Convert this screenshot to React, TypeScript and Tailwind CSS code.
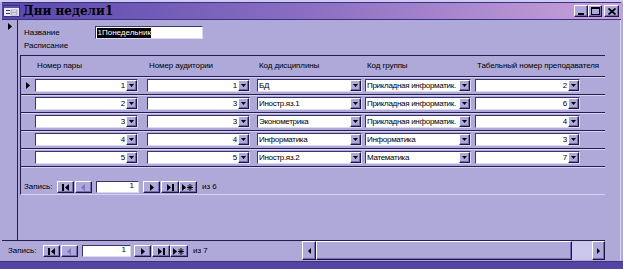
import type { ReactNode } from 'react';

const rows = [
  ['1', '1', 'БД', 'Прикладная информатик.', '2'],
  ['2', '3', 'Иностр.яз.1', 'Прикладная информатик.', '6'],
  ['3', '3', 'Эконометрика', 'Прикладная информатик.', '4'],
  ['4', '4', 'Информатика', 'Информатика', '3'],
  ['5', '5', 'Иностр.яз.2', 'Математика', '7'],
];

const cols = [
  { title: 'Номер пары', cell: 'w-[112px]', box: 'w-[103px]', right: true },
  { title: 'Номер аудитории', cell: 'w-[110px]', box: 'w-[103px]', right: true },
  { title: 'Код дисциплины', cell: 'w-[108px]', box: 'w-[105px]', right: false },
  { title: 'Код группы', cell: 'w-[110px]', box: 'w-[106px]', right: false },
  { title: 'Табельный номер преподавателя', cell: 'w-[110px]', box: 'w-[105px]', right: true },
];

function Raised({ className, children }: { className: string; children?: ReactNode }) {
  return (
    <div
      className={`flex items-center justify-center bg-[#aea9d9] border border-t-white border-l-white border-r-[#1c1742] border-b-[#1c1742] shadow-[inset_-1px_-1px_0_#736db0] ${className}`}
    >
      {children}
    </div>
  );
}

function DropBtn() {
  return (
    <Raised className="w-[11px] h-[11px] shrink-0">
      <svg width="5" height="3" viewBox="0 0 5 3">
        <path d="M0 0H5L2.5 3Z" fill="#000" />
      </svg>
    </Raised>
  );
}

function Combo({ value, box, right }: { value: string; box: string; right: boolean }) {
  return (
    <div
      className={`flex h-[13px] items-center bg-white border-t border-l border-[#39346a] border-r border-b border-r-[#dcd9f3] border-b-[#dcd9f3] ${box}`}
    >
      <div
        className={`flex-1 overflow-hidden whitespace-nowrap px-[1px] leading-none tracking-[-0.3px] ${right ? 'text-right' : 'text-left'}`}
      >
        {value}
      </div>
      <DropBtn />
    </div>
  );
}

function NavIcon({ kind }: { kind: string }) {
  if (kind === 'first')
    return (
      <svg width="9" height="7" viewBox="0 0 9 7">
        <rect x="1" y="0" width="2" height="7" fill="#000" />
        <path d="M8 0L4 3.5L8 7Z" fill="#000" />
      </svg>
    );
  if (kind === 'prev')
    return (
      <svg width="9" height="7" viewBox="0 0 9 7">
        <path d="M6 0L2 3.5L6 7Z" fill="#7d77bd" />
      </svg>
    );
  if (kind === 'next')
    return (
      <svg width="9" height="7" viewBox="0 0 9 7">
        <path d="M3 0L7 3.5L3 7Z" fill="#000" />
      </svg>
    );
  if (kind === 'last')
    return (
      <svg width="9" height="7" viewBox="0 0 9 7">
        <path d="M1 0L5 3.5L1 7Z" fill="#000" />
        <rect x="6" y="0" width="2" height="7" fill="#000" />
      </svg>
    );
  return (
    <svg width="12" height="7" viewBox="0 0 12 7">
      <path d="M0 0L4 3.5L0 7Z" fill="#000" />
      <path d="M8 0V7M5 3.5H11M5.8 1.2L10.2 5.8M10.2 1.2L5.8 5.8" stroke="#000" strokeWidth="1" />
    </svg>
  );
}

function NavBar({ total, sub }: { total: string; sub?: boolean }) {
  return (
    <div className="flex items-center h-[12px] leading-none">
      <span className={sub ? 'w-[33px]' : 'w-[35px]'}>Запись:</span>
      <Raised className="w-[17px] h-[12px]"><NavIcon kind="first" /></Raised>
      <Raised className="w-[17px] h-[12px] ml-[1px]"><NavIcon kind="prev" /></Raised>
      <div
        className={`h-[12px] ml-[4px] bg-white border-t border-l border-[#39346a] border-r border-b border-r-[#dcd9f3] border-b-[#dcd9f3] text-right pr-[4px] ${sub ? 'w-[43px]' : 'w-[49px]'}`}
      >
        1
      </div>
      <Raised className={`w-[17px] h-[12px] ${sub ? 'ml-[4px]' : 'ml-[3px]'}`}><NavIcon kind="next" /></Raised>
      <Raised className="w-[18px] h-[12px] ml-[1px]"><NavIcon kind="last" /></Raised>
      <Raised className="w-[18px] h-[12px]"><NavIcon kind="new" /></Raised>
      <span className="ml-[5px]">{total}</span>
    </div>
  );
}

export default function App() {
  return (
    <div className="w-[623px] h-[269px] overflow-hidden flex flex-col bg-[#aea9d9] font-['Liberation_Sans',Arial,sans-serif] text-[8px] text-black">
      <div className="h-[2px] bg-[#cdc8ee]" />
      {/* title bar */}
      <div className="h-[18px] mx-[2px] flex items-center border-t border-b border-[#3b3185] bg-gradient-to-r from-[#5a47ad] via-[#8c6fc2] to-[#caa2da]">
        <svg width="17" height="12" viewBox="0 0 17 12" className="ml-[1px]">
          <rect x="0.5" y="0.5" width="16" height="11" fill="#ecebf7" stroke="#3a3470" />
          <rect x="1" y="1" width="15" height="2" fill="#5a53a8" />
          <rect x="3" y="5" width="4" height="1" fill="#3a3470" />
          <rect x="8" y="5" width="6" height="2" fill="#fff" stroke="#6f6aa8" strokeWidth="0.6" />
          <rect x="3" y="8" width="4" height="1" fill="#3a3470" />
          <rect x="8" y="8" width="6" height="2" fill="#fff" stroke="#6f6aa8" strokeWidth="0.6" />
        </svg>
        <span className="ml-[3px] font-['DejaVu_Serif',serif] font-bold text-[12px] leading-none">
          Дни недели1
        </span>
        <div className="flex-1" />
        <div className="flex items-center mr-[2px]">
          <Raised className="w-[14px] h-[12px]">
            <div className="w-[6px] h-[2px] bg-black mt-[6px]" />
          </Raised>
          <Raised className="w-[14px] h-[12px]">
            <div className="w-[9px] h-[8px] border border-black border-t-2" />
          </Raised>
          <Raised className="w-[15px] h-[12px] ml-[2px]">
            <svg width="8" height="7" viewBox="0 0 8 7">
              <path d="M0.5 0.5L7.5 6.5M7.5 0.5L0.5 6.5" stroke="#000" strokeWidth="1.8" />
            </svg>
          </Raised>
        </div>
      </div>

      {/* body */}
      <div className="flex-1 flex mx-[2px]">
        <div className="w-[603px] flex flex-col">
          <div className="flex-1 flex border-b border-[#231d50]">
            <div className="w-[16px] border-r border-[#231d50] pt-[3px] pl-[6px]">
              <svg width="4" height="7" viewBox="0 0 4 7">
                <path d="M0 0L4 3.5L0 7Z" fill="#000" />
              </svg>
            </div>
            <div className="flex-1 pt-[6px]">
              <div className="flex items-center h-[13px]">
                <span className="w-[77px] pl-[6px] leading-none">Название</span>
                <div className="w-[108px] h-[13px] bg-white border-t border-l border-[#39346a] border-r border-b border-r-[#dcd9f3] border-b-[#dcd9f3] flex items-center pl-[1px]">
                  <span className="bg-black text-white leading-[10px] px-[0.5px]">1Понедельник</span>
                </div>
              </div>
              <div className="h-[11px] mt-[1px] pl-[6px] flex items-center leading-none">Расписание</div>

              {/* subform */}
              <div className="ml-[2px] w-[585px] mt-[4px] border-t border-l border-[#231d50] border-b border-b-[#d7d3f2]">
                <div className="flex h-[21px] items-center border-b border-[#231d50] shadow-[0_1px_0_#d6d2f1]">
                  <div className="w-[14px]" />
                  {cols.map((c) => (
                    <div key={c.title} className={`${c.cell} pl-[2px] whitespace-nowrap leading-none tracking-[-0.1px]`}>
                      {c.title}
                    </div>
                  ))}
                </div>
                {rows.map((r, i) => (
                  <div
                    key={i}
                    className="flex h-[18px] items-center border-b border-[#231d50] shadow-[0_1px_0_#d6d2f1]"
                  >
                    <div className="w-[14px] pl-[5px] flex items-center">
                      {i === 0 && (
                        <svg width="4" height="7" viewBox="0 0 4 7">
                          <path d="M0 0L4 3.5L0 7Z" fill="#000" />
                        </svg>
                      )}
                    </div>
                    {cols.map((c, j) => (
                      <div key={j} className={c.cell}>
                        <Combo value={r[j]} box={c.box} right={c.right} />
                      </div>
                    ))}
                  </div>
                ))}
                <div className="mt-[14px] pl-[3px] mb-[1px]">
                  <NavBar total="из 6" sub />
                </div>
              </div>
            </div>
          </div>

          {/* bottom record navigation + scrollbar */}
          <div className="h-[20px] flex items-center">
            <div className="w-[300px] pl-[6px]">
              <NavBar total="из 7" />
            </div>
            <div className="flex-1 h-[20px] flex">
              <Raised className="w-[14px] h-[19px]">
                <svg width="3" height="6" viewBox="0 0 3 6">
                  <path d="M3 0L0 3L3 6Z" fill="#000" />
                </svg>
              </Raised>
              <Raised className="w-[256px] h-[19px]" />
              <div className="flex-1 h-[19px] bg-[#cbc7ec]" />
              <Raised className="w-[13px] h-[19px]">
                <svg width="3" height="6" viewBox="0 0 3 6">
                  <path d="M0 0L3 3L0 6Z" fill="#000" />
                </svg>
              </Raised>
            </div>
          </div>
        </div>
        <div className="flex-1 border-r border-[#d9d5f3]" />
      </div>
      <div className="h-[8px] bg-[#5545a3] border-t border-[#3b3185]" />
    </div>
  );
}
